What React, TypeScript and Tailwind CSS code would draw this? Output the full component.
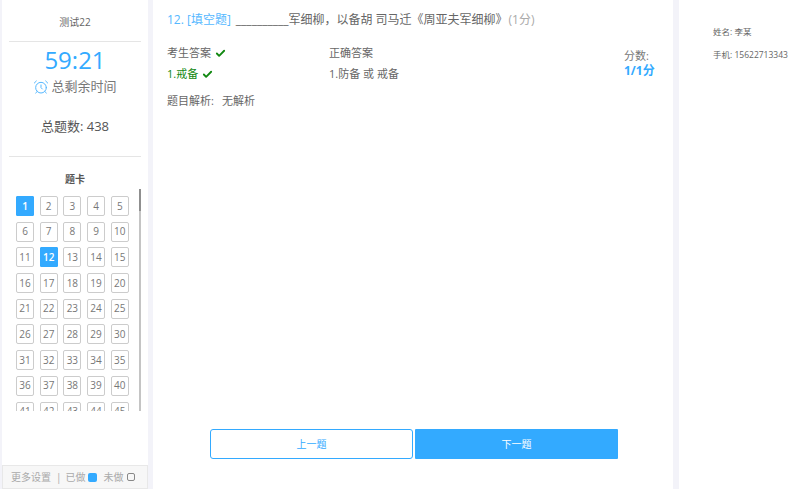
import { Check, AlarmClock } from 'lucide-react';

const font = { fontFamily: '"Open Sans", "Noto Sans CJK SC", sans-serif' };
const nums = Array.from({ length: 50 }, (_, i) => i + 1);

function Cell({ n }: { n: number }) {
  const active = n === 1 || n === 12;
  return (
    <div
      className={
        active
          ? 'flex h-[20px] w-[18px] items-center justify-center rounded-[1px] border border-[#33aaff] bg-[#33aaff] text-[10px] font-semibold text-white'
          : 'flex h-[20px] w-[18px] items-center justify-center rounded-[2px] border border-[#cccccc] bg-white text-[10px] text-[#777]'
      }
    >
      {n}
    </div>
  );
}

export default function App() {
  return (
    <div className="flex h-[489px] w-[794px] overflow-hidden bg-[#f3f3f9] pl-[2px] text-[#444]" style={font}>
      {/* left panel */}
      <aside className="flex w-[146px] shrink-0 flex-col bg-white">
        <div className="mx-[7px] flex h-[42px] items-center justify-center border-b border-[#e5e5e5] pt-[4px] text-[10px] text-[#666]">
          测试22
        </div>
        <div className="mx-[7px] flex h-[115px] flex-col items-center border-b border-[#e5e5e5]">
          <div className="mt-[1px] h-[33px] text-[24px] leading-[33px] text-[#33aaff]">59:21</div>
          <div className="mt-[1px] flex h-[20px] items-center gap-[2px] text-[13px] text-[#777]">
            <AlarmClock size={16} strokeWidth={1.5} className="text-[#55b8ff]" />
            总剩余时间
          </div>
          <div className="mt-[20px] text-[13px] text-[#555]">总题数: 438</div>
        </div>
        <div className="mt-[15px] text-center text-[10px] font-semibold leading-[14px] text-[#555]">题卡</div>
        <div className="mt-[3px] flex h-[222px] pr-[7px]">
          <div className="min-w-0 flex-1 overflow-hidden pl-[14px] pt-[7px]">
            <div className="grid grid-cols-[repeat(5,18px)] gap-x-[5.7px] gap-y-[5.7px]">
              {nums.map(n => (
                <Cell key={n} n={n} />
              ))}
            </div>
          </div>
          <div className="w-[2px] bg-[#c4c4c4]">
            <div className="h-[22px] bg-[#8f8f8f]" />
          </div>
        </div>
        <div className="mt-auto flex h-[24px] items-center border border-[#e8e8e8] bg-[#f7f7f7] pl-[8px] text-[10px] text-[#aaa]">
          更多设置
          <span className="ml-[5px] mr-[4px]">|</span>
          已做
          <span className="ml-[2px] h-[9px] w-[9px] rounded-[2px] bg-[#33aaff]" />
          <span className="ml-[7px]">未做</span>
          <span className="ml-[3px] h-[8px] w-[8px] rounded-[2px] border border-[#888]" />
        </div>
      </aside>

      {/* main */}
      <main className="ml-[5px] flex w-[520px] shrink-0 flex-col bg-white pl-[14px]">
        <div className="mt-[11px] flex h-[18px] items-center text-[12px] leading-[18px]">
          <span className="text-[#55b8ff]">12. [填空题]</span>
          <span className="ml-[5px] text-[#666]">__________军细柳，以备胡 司马迁《周亚夫军细柳》</span>
          <span className="ml-[1px] text-[#aaa]">(1分)</span>
        </div>
        <div className="mt-[16px] flex text-[11px]">
          <div className="w-[162px]">
            <div className="flex h-[16px] items-center gap-[4px] text-[#666]">
              考生答案
              <Check size={11} strokeWidth={4} className="text-[#118811]" />
            </div>
            <div className="mt-[5px] flex h-[16px] items-center gap-[4px] text-[#118811]">
              1.戒备
              <Check size={11} strokeWidth={4} />
            </div>
          </div>
          <div className="w-[295px] text-[#666]">
            <div className="h-[16px] leading-[16px]">正确答案</div>
            <div className="mt-[5px] h-[16px] leading-[16px]">1.防备 或 戒备</div>
          </div>
          <div className="pt-[3px]">
            <div className="h-[16px] leading-[16px] text-[#777]">分数:</div>
            <div className="-mt-[1px] h-[16px] text-[12px] font-bold leading-[16px] text-[#33aaff]">1/1分</div>
          </div>
        </div>
        <div className="mt-[11px] flex h-[16px] items-center text-[11px] text-[#666]">
          题目解析:
          <span className="ml-[8px]">无解析</span>
        </div>
        <div className="mb-[30px] ml-[43px] mt-auto flex gap-[2px] text-[10px]">
          <button className="h-[30px] w-[203px] rounded-[3px] border border-[#33aaff] bg-white text-[#33aaff]">上一题</button>
          <button className="h-[30px] w-[203px] rounded-[1px] bg-[#33aaff] text-white">下一题</button>
        </div>
      </main>

      {/* right panel */}
      <aside className="ml-[6px] flex-1 bg-white pl-[34px] pt-[26px] text-[8.5px] text-[#666]">
        <div className="h-[12px] leading-[12px]">姓名: 李某</div>
        <div className="mt-[11px] h-[12px] leading-[12px]">手机: 15622713343</div>
      </aside>
    </div>
  );
}
